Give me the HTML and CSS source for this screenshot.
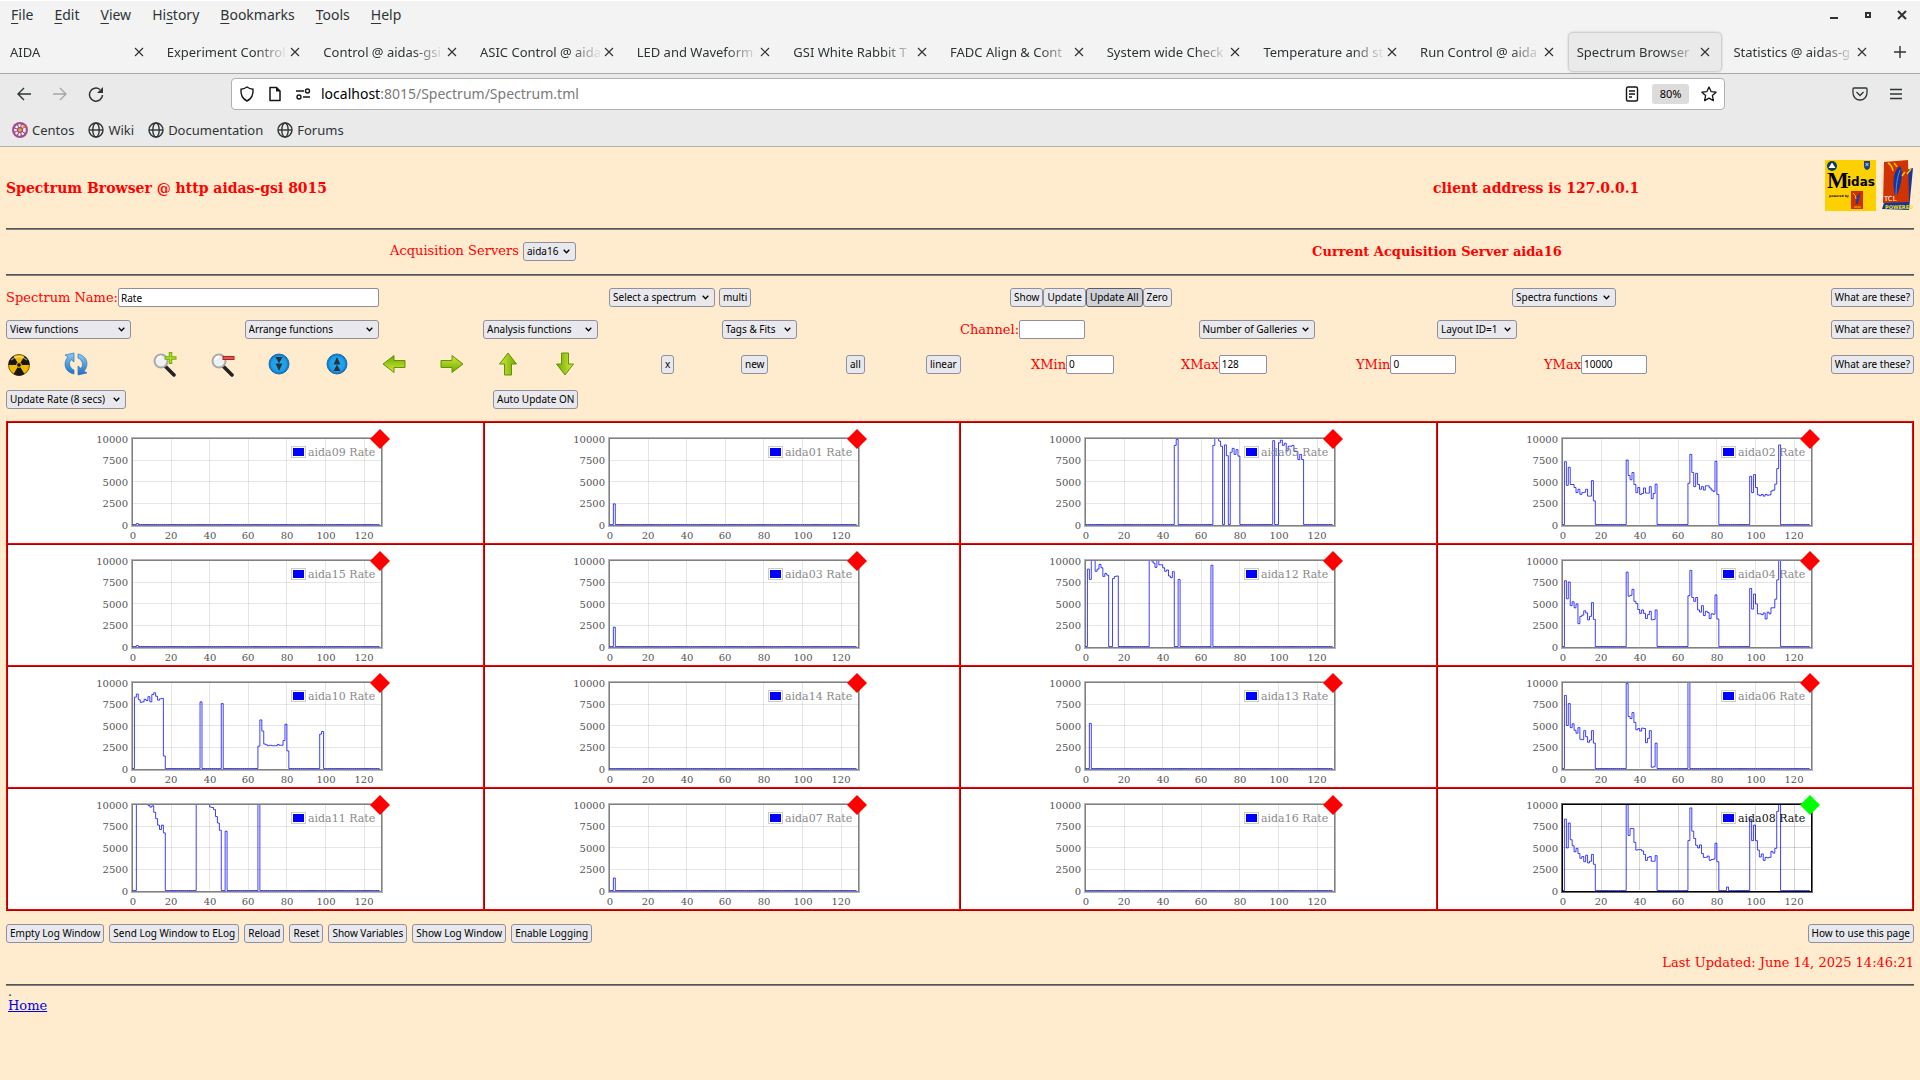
FILE: index.html
```html
<!DOCTYPE html>
<html lang="en">
<head>
<meta charset="utf-8">
<title>Spectrum Browser @ aidas-gsi</title>
<link rel="stylesheet" href="styles.css">
</head>
<body>
<svg class="defs" aria-hidden="true">
  <symbol id="close" viewBox="0 0 10 10"><path d="M1 1l8 8M9 1l-8 8" stroke="currentColor" stroke-width="1.2" fill="none"/></symbol>
  <symbol id="globe" viewBox="0 0 16 16"><g fill="none" stroke="#2e3436" stroke-width="1.4"><circle cx="8" cy="8" r="7"/><ellipse cx="8" cy="8" rx="3.2" ry="7"/><path d="M1 8h14"/></g></symbol>
  <linearGradient id="green" x1="0" y1="0" x2="0" y2="1"><stop offset="0" stop-color="#d4ea3a"/><stop offset="1" stop-color="#6fa800"/></linearGradient>
  <linearGradient id="blue" x1="0" y1="0" x2="0" y2="1"><stop offset="0" stop-color="#8ccbf5"/><stop offset="1" stop-color="#1f6fc4"/></linearGradient>
  <radialGradient id="disc"><stop offset="0" stop-color="#22b4f5"/><stop offset="0.75" stop-color="#1d9be8"/><stop offset="1" stop-color="#1266ad"/></radialGradient>
  <symbol id="arrow" viewBox="0 0 26 26"><path d="M2 9.500h11V4.500l11 8.500-11 8.500v-5H2z" fill="url(#green)" stroke="#5f9408" stroke-width="1"/></symbol>
  <symbol id="lens" viewBox="0 0 26 26"><path d="M13 15l9 9" stroke="#222" stroke-width="3.500" stroke-linecap="round"/><circle cx="9" cy="10" r="6.500" fill="#eef0f2" stroke="#a9a9a9" stroke-width="2"/><path d="M5.500 9a4 4 0 0 1 4-3.500" stroke="#fff" stroke-width="2" fill="none"/></symbol>
</svg>

<header class="chrome">
  <div class="menubar">
    <nav class="menus">
      <span><u>F</u>ile</span><span><u>E</u>dit</span><span><u>V</u>iew</span><span>Hi<u>s</u>tory</span><span><u>B</u>ookmarks</span><span><u>T</u>ools</span><span><u>H</u>elp</span>
    </nav>
    <div class="winbtns">
      <button aria-label="Minimize"><svg viewBox="0 0 10 10"><path d="M1 8h8" stroke="#2e3436" stroke-width="2"/></svg></button>
      <button aria-label="Maximize"><svg viewBox="0 0 10 10"><path d="M3 3h4v4H3z" stroke="#2e3436" stroke-width="2" fill="none"/></svg></button>
      <button aria-label="Close"><svg viewBox="0 0 10 10"><path d="M1 1l8 8M9 1l-8 8" stroke="#2e3436" stroke-width="2"/></svg></button>
    </div>
  </div>
  <div class="tabs">
    <div class="tab"><span>AIDA</span><svg><use href="#close"/></svg></div>
    <div class="tab"><span>Experiment Control</span><svg><use href="#close"/></svg></div>
    <div class="tab"><span>Control @ aidas-gsi</span><svg><use href="#close"/></svg></div>
    <div class="tab"><span>ASIC Control @ aidas</span><svg><use href="#close"/></svg></div>
    <div class="tab"><span>LED and Waveform</span><svg><use href="#close"/></svg></div>
    <div class="tab"><span>GSI White Rabbit T</span><svg><use href="#close"/></svg></div>
    <div class="tab"><span>FADC Align &amp; Cont</span><svg><use href="#close"/></svg></div>
    <div class="tab"><span>System wide Check</span><svg><use href="#close"/></svg></div>
    <div class="tab"><span>Temperature and st</span><svg><use href="#close"/></svg></div>
    <div class="tab"><span>Run Control @ aida</span><svg><use href="#close"/></svg></div>
    <div class="tab current"><span>Spectrum Browser</span><svg><use href="#close"/></svg></div>
    <div class="tab"><span>Statistics @ aidas-g</span><svg><use href="#close"/></svg></div>
    <button class="newtab" aria-label="New tab"><svg viewBox="0 0 12 12"><path d="M6 0v12M0 6h12" stroke="#2e3436" stroke-width="1.400"/></svg></button>
  </div>
  <div class="toolbar">
    <div class="navbtns">
      <button aria-label="Back"><svg viewBox="0 0 16 16"><path d="M15 8H2M8 2L2 8l6 6" fill="none" stroke="#2e3436" stroke-width="1.400"/></svg></button>
      <button aria-label="Forward"><svg viewBox="0 0 16 16"><path d="M1 8h13M8 2l6 6-6 6" fill="none" stroke="#a5a7a8" stroke-width="1.400"/></svg></button>
      <button aria-label="Reload"><svg viewBox="0 0 16 16"><path d="M14.500 9A6.500 6.500 0 1 1 12 3.500" fill="none" stroke="#2e3436" stroke-width="1.500"/><path d="M15 1v6H9z" fill="#2e3436"/></svg></button>
    </div>
    <div class="urlbar">
      <svg viewBox="0 0 16 16"><path d="M8 1c2 1.500 4 2 6 2.200C14.500 9 12 13 8 15 4 13 1.500 9 2 3.200 4 3 6 2.500 8 1z" fill="none" stroke="#15141a" stroke-width="1.400"/></svg>
      <svg viewBox="0 0 16 16"><path d="M3 1.500h6.500L13 5v9.500H3z" fill="none" stroke="#15141a" stroke-width="1.500" stroke-linejoin="round"/><path d="M9 1l4.500 4.500H9z" fill="#15141a"/></svg>
      <svg viewBox="0 0 16 16"><g fill="none" stroke="#15141a" stroke-width="1.400"><path d="M1 5h8M8 11h7"/><circle cx="12.500" cy="5" r="2"/><circle cx="4" cy="11" r="2"/></g></svg>
      <div class="url"><b>localhost</b>:8015/Spectrum/Spectrum.tml</div>
      <svg viewBox="0 0 16 16"><g fill="none" stroke="#15141a" stroke-width="1.400"><rect x="2.500" y="1" width="11" height="14" rx="1.500"/><path d="M5 5h6M5 8h6M5 11h3"/></g></svg>
      <button class="zoom">80%</button>
      <svg viewBox="0 0 16 16"><path d="M8 1l2.100 4.600 5 .6-3.700 3.400 1 5L8 12.100l-4.400 2.500 1-5L.9 6.200l5-.6z" fill="none" stroke="#15141a" stroke-width="1.300" stroke-linejoin="round"/></svg>
    </div>
    <div class="endbtns">
      <button aria-label="Save to Pocket"><svg viewBox="0 0 16 16"><g fill="none" stroke="#2e3436" stroke-width="1.300"><path d="M2 2h12q1 0 1 1v4a7 7 0 0 1-14 0V3q0-1 1-1z"/><path d="M4.500 6L8 9.500 11.500 6"/></g></svg></button>
      <button aria-label="Menu"><svg viewBox="0 0 16 16"><path d="M2 3.500h12M2 8h12M2 12.500h12" stroke="#2e3436" stroke-width="1.300"/></svg></button>
    </div>
  </div>
  <nav class="bookmarks">
    <span><svg viewBox="0 0 16 16"><circle cx="8" cy="8" r="8" fill="#a14f8c"/><circle cx="8" cy="8" r="4.500" fill="none" stroke="#fff" stroke-width="2.500" stroke-dasharray="2 1.200"/><circle cx="8" cy="8" r="1.800" fill="#efa724"/><circle cx="11.500" cy="4.500" r="1.300" fill="#efa724"/></svg>Centos</span>
    <span><svg><use href="#globe"/></svg>Wiki</span>
    <span><svg><use href="#globe"/></svg>Documentation</span>
    <span><svg><use href="#globe"/></svg>Forums</span>
  </nav>
</header>

<main class="page">
  <div class="banner">
    <h1>Spectrum Browser @ http aidas-gsi 8015</h1>
    <h2>client address is 127.0.0.1</h2>
    <div class="logos">
      <svg class="midas" viewBox="0 0 51 51" role="img" aria-label="Midas">
        <rect width="51" height="51" fill="#fdd000"/>
        <circle cx="7" cy="6" r="5" fill="#0d3b66"/><path d="M3.500 8L7 2.500 10.500 8z" fill="#fff"/>
        <path d="M39 1h6v5q0 3-3 4-3-1-3-4z" fill="#1c3f94"/><path d="M40.500 3l3 3M43.500 3l-3 3" stroke="#fff" stroke-width="0.800"/>
        <text x="2" y="28" class="midas-m">M</text><text x="22" y="26" class="midas-t">idas</text>
        <text x="4" y="37" class="midas-s">powered by</text>
        <rect x="26" y="31" width="12" height="18" fill="#cf2e00"/><path d="M31 44q-1-8 4-11-1 6-2 11z" fill="#1b3fa0"/><path d="M28 33q3 2 3 6M29 47h7" stroke="#f5c400" fill="none"/>
      </svg>
      <svg class="tcl" viewBox="0 0 33 51" role="img" aria-label="Tcl Powered">
        <path d="M25 10l7-2-4 42-27-1 3-9z" fill="#12369c"/>
        <path d="M3 2l24-2 1 42-26 1z" fill="#d03300"/>
        <path d="M14 35C11 24 12 10 19 6c4 5 1 20-3 29z" fill="#12369c"/><path d="M15 35q0-15 4-25" stroke="#7ea6e8" stroke-width=".7" fill="none"/>
        <path d="M7 3q4 2 5 8M13 3q2 2 3 4M24 12l-3 4M30 9l-4 5" stroke="#f6c400" stroke-width="1.500" fill="none"/>
        <text x="3" y="41" class="tcl-a">TCL</text><text x="4" y="49" class="tcl-b">POWERED</text>
      </svg>
    </div>
  </div>
  <hr>
  <div class="servers">
    <div><label for="server">Acquisition Servers</label> <select id="server"><option>aida16</option></select></div>
    <h3>Current Acquisition Server aida16</h3>
  </div>
  <hr>

  <form class="controls">
    <div class="row row-name">
      <div class="field"><label for="name">Spectrum Name:</label><input id="name" class="w-name" value="Rate"></div>
      <div class="spaced"><select class="w-spectrum" aria-label="Select a spectrum"><option>Select a spectrum</option></select><button type="button">multi</button></div>
      <div><button type="button">Show</button><button type="button">Update</button><button type="button" class="pressed">Update All</button><button type="button">Zero</button></div>
      <div><select class="w-spectra" aria-label="Spectra functions"><option>Spectra functions</option></select></div>
      <div class="end"><button type="button">What are these?</button></div>
    </div>
    <div class="row row-func">
      <div><select class="w-view" aria-label="View functions"><option>View functions</option></select></div>
      <div><select class="w-arrange" aria-label="Arrange functions"><option>Arrange functions</option></select></div>
      <div><select class="w-analysis" aria-label="Analysis functions"><option>Analysis functions</option></select></div>
      <div><select class="w-tags" aria-label="Tags and fits"><option>Tags &amp; Fits</option></select></div>
      <div class="field"><label for="channel">Channel:</label><input id="channel" class="w-num"></div>
      <div><select class="w-gallery" aria-label="Number of Galleries"><option>Number of Galleries</option></select></div>
      <div><select class="w-layout" aria-label="Layout"><option>Layout ID=1</option></select></div>
      <div class="end"><button type="button">What are these?</button></div>
    </div>
    <div class="row row-icons">
      <button type="button" class="icon" aria-label="Clear"><svg viewBox="0 0 26 26"><circle cx="13" cy="14" r="10.500" fill="#f5b800" stroke="#7a5a00"/><path d="M13 14L7.500 5A10.500 10.500 0 0 0 2.500 14zM13 14l10.500 0A10.500 10.500 0 0 0 18.500 5zM13 14l-5.500 9a10.500 10.500 0 0 0 11 0z" fill="#161616"/><circle cx="13" cy="14" r="2.400" fill="#161616" stroke="#f5b800"/><path d="M5 9q8-7 16 0" stroke="#fff" stroke-opacity=".5" fill="none" stroke-width="1.500"/></svg></button>
      <button type="button" class="icon" aria-label="Refresh"><svg viewBox="0 0 26 26"><g fill="url(#blue)" stroke="#2b75bd" stroke-width=".7"><path d="M11 23C1 21 0 11 5 6L2 4l9-2v9L8 8.500c-3 4-1 9 3 10.500z"/><path d="M15 3c10 2 11 12 6 17l3 2-9 2v-9l3 2.500c3-4 1-9-3-10.500z"/></g></svg></button>
      <button type="button" class="icon" aria-label="Zoom in"><svg viewBox="0 0 26 26"><use href="#lens"/><path d="M18.500 1v12M12.500 7h12" stroke="#6fae0a" stroke-width="3.500"/><path d="M18.500 2v10M13.500 7h10" stroke="#b5dc2a" stroke-width="1.500"/></svg></button>
      <button type="button" class="icon" aria-label="Zoom out"><svg viewBox="0 0 26 26"><use href="#lens"/><path d="M12.500 7h12" stroke="#b81f1f" stroke-width="4"/><path d="M13.500 7h10" stroke="#f26a6a" stroke-width="1.500"/></svg></button>
      <button type="button" class="icon" aria-label="Compress"><svg viewBox="0 0 26 26"><circle cx="13" cy="13" r="10" fill="url(#disc)" stroke="#1670b8"/><path d="M9.500 6h7L13 12.500zM9.500 12.500h7L13 20z" fill="#26323c"/></svg></button>
      <button type="button" class="icon" aria-label="Expand"><svg viewBox="0 0 26 26"><circle cx="13" cy="13" r="10" fill="url(#disc)" stroke="#1670b8"/><path d="M9.500 13.500h7L13 6zM9.500 20h7L13 13.500z" fill="#26323c"/></svg></button>
      <button type="button" class="icon" aria-label="Left"><svg viewBox="0 0 26 26"><use href="#arrow" transform="rotate(180 13 13)"/></svg></button>
      <button type="button" class="icon" aria-label="Right"><svg viewBox="0 0 26 26"><use href="#arrow"/></svg></button>
      <button type="button" class="icon" aria-label="Up"><svg viewBox="0 0 26 26"><use href="#arrow" transform="rotate(-90 13 13)"/></svg></button>
      <button type="button" class="icon" aria-label="Down"><svg viewBox="0 0 26 26"><use href="#arrow" transform="rotate(90 13 13)"/></svg></button>
      <div><button type="button">x</button></div>
      <div><button type="button">new</button></div>
      <div><button type="button">all</button></div>
      <div><button type="button">linear</button></div>
      <div class="field"><label for="xmin">XMin</label><input id="xmin" class="w-x" value="0"></div>
      <div class="field"><label for="xmax">XMax</label><input id="xmax" class="w-x" value="128"></div>
      <div class="field"><label for="ymin">YMin</label><input id="ymin" class="w-num" value="0"></div>
      <div class="field"><label for="ymax">YMax</label><input id="ymax" class="w-num" value="10000"></div>
      <div class="end"><button type="button">What are these?</button></div>
    </div>
    <div class="row row-rate">
      <div><select class="w-rate" aria-label="Update rate"><option>Update Rate (8 secs)</option></select></div>
      <div><button type="button">Auto Update ON</button></div>
    </div>
  </form>

  <section class="gallery" id="gallery"></section>

  <div class="log">
    <button>Empty Log Window</button><button>Send Log Window to ELog</button><button>Reload</button><button>Reset</button><button>Show Variables</button><button>Show Log Window</button><button>Enable Logging</button>
    <button class="help">How to use this page</button>
  </div>
  <p class="updated">Last Updated: June 14, 2025 14:46:21</p>
  <hr>
  <footer><small>.</small><a href="#">Home</a></footer>
</main>
<script src="charts.js"></script>
</body>
</html>
```
FILE: styles.css
```css
* { box-sizing: border-box; }
body {
  margin: 0;
  min-height: 100vh;
  background: #ffebcd;
  color: red;
  font: 13px/15px "DejaVu Serif", serif;
}
.defs { position: absolute; width: 0; height: 0; }
svg { display: block; flex: none; }
button, select, input { font: 10px/14px "Noto Sans", sans-serif; color: #000; margin: 0; }

/* browser window */
.chrome { font: 13px/18px "Noto Sans", sans-serif; color: #2e3436; background: #f3f3f3; border-top: 1px solid #fff; }
.chrome button { border: 0; background: none; padding: 0; }
.menubar { display: flex; justify-content: space-between; align-items: center; height: 28px; padding: 0 13px 0 11px; }
.menus { display: flex; gap: 21px; font-size: 14px; }
.menus u { text-underline-offset: 3px; }
.winbtns { display: flex; gap: 24px; }
.winbtns svg { width: 10px; height: 10px; }
.tabs { display: flex; height: 45px; padding: 4px 0 2px; border-bottom: 1px solid #a8a8a8; }
.tab { flex: 1; min-width: 0; display: flex; align-items: center; margin: 0 2px; padding: 0 11px 0 8px; border-radius: 4px; }
.tab span {
  flex: 1; overflow: hidden; white-space: nowrap;
  -webkit-mask-image: linear-gradient(to right, #000 calc(100% - 32px), transparent);
  mask-image: linear-gradient(to right, #000 calc(100% - 32px), transparent);
}
.tab svg { width: 10px; height: 10px; margin-left: 2px; }
.tab.current { background: #eaeaea; box-shadow: 0 0 3px #8f8f9d; }
.newtab { flex: none; width: 40px; display: flex; align-items: center; justify-content: center; }
.newtab svg { width: 12px; height: 12px; }
.toolbar { display: flex; align-items: center; height: 40px; background: #eaeaea; }
.navbtns { flex: 0 0 231px; display: flex; gap: 20px; padding-left: 16px; }
.toolbar svg { width: 16px; height: 16px; }
.urlbar { flex: 1; display: flex; align-items: center; gap: 12px; height: 32px; padding: 0 7px; background: #fff; border: 1px solid #b0b0b0; border-radius: 4px; }
.url { flex: 1; font-size: 14px; color: #7a7a7a; margin-left: -2px; }
.url b { font-weight: 400; color: #000; }
.urlbar .zoom { width: 37px; height: 20px; background: #dcdcdc; border-radius: 3px; font-size: 11px; }
.endbtns { flex: 0 0 195px; display: flex; justify-content: flex-end; gap: 20px; padding-right: 16px; }
.bookmarks { display: flex; gap: 14px; height: 33px; align-items: center; padding: 0 12px 1px; background: #eaeaea; border-bottom: 1px solid #b0b0b0; }
.bookmarks span { display: flex; align-items: center; gap: 4px; }
.bookmarks svg { width: 16px; height: 16px; }

/* page */
.page { padding: 0 6px; }
hr { height: 2px; margin: 0; border: 0; border-top: 1px solid #555; border-bottom: 1px solid #808080; }
h1, h2, h3, p { margin: 0; }
h1, h2 { font-size: 14px; line-height: 18px; }
h3 { font-size: 13px; }
.banner { display: grid; grid-template-columns: minmax(0, 1427fr) minmax(0, 392fr) 89px; align-items: center; height: 81px; }
.logos { display: flex; justify-content: space-between; margin-bottom: 4px; }
.midas { width: 51px; height: 51px; }
.tcl { width: 33px; height: 51px; }
.midas-m { font: bold 23px "Liberation Serif", serif; }
.midas-t { font: bold 12px "DejaVu Sans", sans-serif; }
.midas-s { font: bold 3px "DejaVu Sans", sans-serif; }
.tcl-a { font: 7px "DejaVu Sans", sans-serif; fill: #fff; }
.tcl-b { font: bold 5px "DejaVu Sans", sans-serif; fill: #f6e000; }
.servers { display: grid; grid-template-columns: 1fr 1fr; align-items: center; justify-items: center; height: 44px; padding-bottom: 2px; }

.page button:not(.icon), select {
  height: 19px; padding: 1px 3px 2px; background-color: #e9e9ed;
  border: 1px solid #8f8f9d; border-radius: 3px; vertical-align: middle; white-space: nowrap;
}
select {
  appearance: none; padding-right: 16px; background-repeat: no-repeat; background-position: right 5px center;
  background-image: url("data:image/svg+xml,%3Csvg xmlns='http://www.w3.org/2000/svg' width='7' height='5'%3E%3Cpath d='M.7.7l2.800 3 2.800-3' fill='none' stroke='%23000' stroke-width='1.300'/%3E%3C/svg%3E");
}
.page input { height: 19px; padding: 0 2px; background: #fff; border: 1px solid #8f8f9d; border-radius: 2px; }
.page button.pressed { background-color: #d0d0d7; border-color: #5b5b66; }
.page button.icon { width: 26px; height: 26px; padding: 0; border: 0; background: none; }

.controls { padding: 12px 0; }
.row { display: grid; align-items: center; margin-bottom: 13px; }
.row > div { display: flex; align-items: center; white-space: nowrap; }
.row:last-child { margin-bottom: 0; }
.row-name { grid-template-columns: minmax(0, 603fr) minmax(0, 401fr) minmax(0, 502fr) minmax(0, 317fr) 85px; }
.row-func { grid-template-columns: repeat(6, minmax(0, 477fr)) minmax(0, 784fr) 85px; margin-bottom: 12px; }
.row-icons {
  grid-template-columns:
    minmax(0, 57fr) minmax(0, 89fr) minmax(0, 58fr) minmax(0, 56fr) minmax(0, 58fr)
    minmax(0, 57fr) minmax(0, 58fr) minmax(0, 56fr) minmax(0, 57fr) minmax(0, 109fr)
    minmax(0, 80fr) minmax(0, 105fr) minmax(0, 80fr) minmax(0, 105fr) minmax(0, 150fr)
    minmax(0, 175fr) minmax(0, 188fr) minmax(0, 285fr) 85px;
}
.row-rate { grid-template-columns: minmax(0, 487fr) minmax(0, 1421fr); }
.row > .spaced { gap: 4px; }
.row > .end { justify-content: flex-end; }
.w-name { width: 261px; }
.w-spectrum { width: 106px; }
.w-spectra { width: 104px; }
.w-view { width: 125px; }
.w-arrange { width: 134px; }
.w-analysis { width: 115px; }
.w-tags { width: 75px; }
.w-num { width: 66px; }
.w-gallery { width: 116px; }
.w-layout { width: 80px; }
.w-x { width: 48px; }
.w-rate { width: 120px; }

/* spectra */
.gallery {
  display: grid; grid-template-columns: repeat(4, 1fr); gap: 1px; padding: 1px;
  background: red; border: solid #a00; border-width: 0 1px 1px 0;
}
.cell { display: flex; justify-content: center; background: #fff; border: solid #a00; border-width: 1px 0 0 1px; }
.chart { width: 300px; height: 120px; font: 10px "DejaVu Serif", serif; fill: #545454; }
.chart .y { text-anchor: end; }
.chart .x { text-anchor: middle; }
.grid { stroke: #545454; stroke-opacity: .15; shape-rendering: crispEdges; }
.frame-out { fill: none; stroke: #b4b4b4; }
.frame-in { fill: none; stroke: #808080; }
.line { fill: none; stroke: #00f; stroke-opacity: .75; }
.swatch { fill: #fff; stroke: #ccc; }
.fill { fill: #00f; }
.legend { fill: #8a8a8a; font-size: 11px; }
.mark { fill: red; }
.active .frame-out { stroke: #666; }
.active .frame-in { stroke: #000; }
.active .grid { stroke-opacity: .25; }
.active .legend { fill: #111; }
.active .mark { fill: #0f0; }

.log { display: flex; gap: 5px; margin-top: 13px; }
.log .help { margin-left: auto; }
.updated { margin: 12px 0 14px; text-align: right; }
footer { padding-left: 2px; color: #333; }
footer small { display: block; font-size: 13px; line-height: 12px; }
footer a { display: inline-block; color: #00e; }
```
FILE: charts.js
```js
// Each series is a list of runs: a first channel and the counts from there on.
// Channels outside the runs hold zero.
const flat = [];
const charts = [
  ["aida09", [[2, 120]]],
  ["aida01", [[2, 2400]]],
  ["aida05", [[46, 9200, 9900], [66, 9200, 10500, 10500, 9700, 9100, 0, 9250, 8000, 0, 8400, 8850, 8150, 8700, 7950],
    [97, 9750, 0, 0, 9500, 9800, 9200, 9450, 8550, 9100, 9100, 9200, 8500, 8500, 7550, 8150, 7550]]],
  ["aida02", [[1, 7300, 4550, 6650, 4650, 4650, 4300, 3700, 4100, 3500, 3700, 3750, 4100, 3300, 3300, 5100, 2750],
    [33, 7500, 5700, 5200, 6050, 4650, 3700, 4300, 3500, 3600, 4250, 3650, 3650, 4400, 3000, 3600, 4700],
    [65, 4800, 8150, 6050, 4400, 5950, 4650, 4100, 4400, 4000, 4500, 4500, 4250, 4000, 3850, 7350, 3500],
    [97, 5600, 3700, 5800, 4300, 3450, 3350, 3500, 3300, 3500, 3400, 3450, 3900, 4000, 4700, 6500, 9250]]],
  ["aida15", [[2, 120]]],
  ["aida03", [[2, 2250]]],
  ["aida12", [[1, 9000, 7800, 10500, 10500, 8750, 9000, 9550, 9150, 8150, 8500, 8300, 0, 0, 7900, 8150, 8200],
    [33, 10000, 9950, 9700, 9200, 10300, 9500, 9500, 9150, 8750, 8900, 8200, 8000, 8700, 0, 0, 7800], [65, 9450]]],
  ["aida04", [[1, 7650, 5550, 7500, 4750, 5200, 4500, 4950, 2650, 3500, 3650, 4150, 3900, 3100, 3500, 5100, 3150],
    [33, 8650, 5850, 5950, 6650, 5250, 5000, 4300, 3850, 4250, 3850, 3250, 3700, 4100, 3100, 3150, 4250],
    [65, 5900, 8850, 5700, 5250, 5700, 4250, 4000, 4750, 3600, 4100, 3950, 3250, 3800, 3750, 6000, 3200],
    [97, 6750, 4350, 6100, 4950, 3800, 3800, 3700, 3900, 3200, 4000, 3800, 4500, 4500, 5500, 7750, 10500]]],
  ["aida10", [[1, 8300, 8650, 8000, 7700, 7750, 8050, 7900, 8350, 7750, 8600, 8800, 8400, 7950, 8100, 8150, 1450],
    [35, 7750], [46, 7550],
    [65, 2600, 5650, 4350, 2850, 2750, 2650, 2700, 2650, 2650, 2650, 2800, 2700, 2700, 3250, 5150, 2050], [97, 4000, 4300]]],
  ["aida14", flat],
  ["aida13", [[2, 5250]]],
  ["aida06", [[1, 8500, 5000, 7550, 4750, 5200, 4450, 4100, 4750, 3400, 3350, 4400, 3700, 3050, 3300, 4400, 2950],
    [33, 9900, 6050, 5800, 6500, 5350, 4500, 4650, 4350, 4700, 4650, 3000, 3500, 4400, 150, 200, 2950], [65, 10500]]],
  ["aida11", [[2, 10500, 10500, 10500, 10500, 10500, 10500, 9900, 9700, 9850, 9100, 8350, 7600, 7100, 7600, 6700],
    [33, 10500, 10500, 10500, 10500, 10500, 10500, 10500, 9700, 9650, 9400, 8600, 7850, 7000, 0, 0, 6900], [65, 10500]]],
  ["aida07", [[2, 1450]]],
  ["aida16", flat],
  ["aida08", [[1, 8300, 4950, 7850, 5900, 5200, 4500, 4900, 4300, 3750, 3950, 3350, 4100, 3200, 3400, 4200, 3050],
    [33, 10500, 6400, 7200, 7200, 5600, 4700, 4750, 4750, 4600, 4200, 3500, 3850, 3950, 3400, 3400, 4050],
    [65, 5800, 9600, 6900, 6050, 5250, 4950, 5300, 4300, 3850, 3850, 4000, 3500, 3600, 3650, 5500, 3350], [85, 400],
    [97, 8300, 5800, 7600, 5800, 4700, 3900, 4250, 3500, 3850, 3800, 3850, 4550, 4350, 4900, 9200, 10500]], true]
];

const LEFT = 37.5, BASE = 101.5, UNIT = 1.93, HEIGHT = 86;
const px = ch => LEFT + ch * UNIT;
const py = v => BASE - v * HEIGHT / 10000;

function draw([name, runs, active]) {
  const data = new Array(128).fill(0);
  runs.forEach(([start, ...values]) => values.forEach((v, i) => { data[start + i] = v; }));
  let path = `M${px(0)} ${py(0)}`;
  data.forEach((v, i) => {
    if (i && v !== data[i - 1]) path += `V${py(v)}`;
    path += `H${px(i + 1)}`;
  });
  let out = "";
  for (let x = 0; x <= 120; x += 20) {
    if (x) out += `<path class="grid" d="M${px(x)} 16V101"/>`;
    out += `<text class="x" x="${Math.round(px(x))}" y="116">${x}</text>`;
  }
  for (let y = 0; y <= 10000; y += 2500) {
    if (y % 10000) out += `<path class="grid" d="M38 ${py(y)}H286"/>`;
    out += `<text class="y" x="33" y="${Math.round(py(y)) + 4}">${y}</text>`;
  }
  return `<div class="cell${active ? " active" : ""}"><svg class="chart" viewBox="0 0 300 120">${out}
    <rect class="frame-out" x="36.5" y="14.5" width="251" height="89"/>
    <rect class="frame-in" x="37.5" y="15.5" width="249" height="87"/>
    <rect class="swatch" x="196.5" y="23.5" width="14" height="11"/><rect class="fill" x="198" y="25" width="11" height="8"/>
    <svg x="0" y="16" width="300" height="86" viewBox="0 16 300 86"><path class="line" d="${path}"/></svg>
    <text class="legend" x="213" y="33">${name} Rate</text>
    <path class="mark" d="M285 6l10 10-10 10-10-10z"/></svg></div>`;
}

document.getElementById("gallery").innerHTML = charts.map(draw).join("");
```
